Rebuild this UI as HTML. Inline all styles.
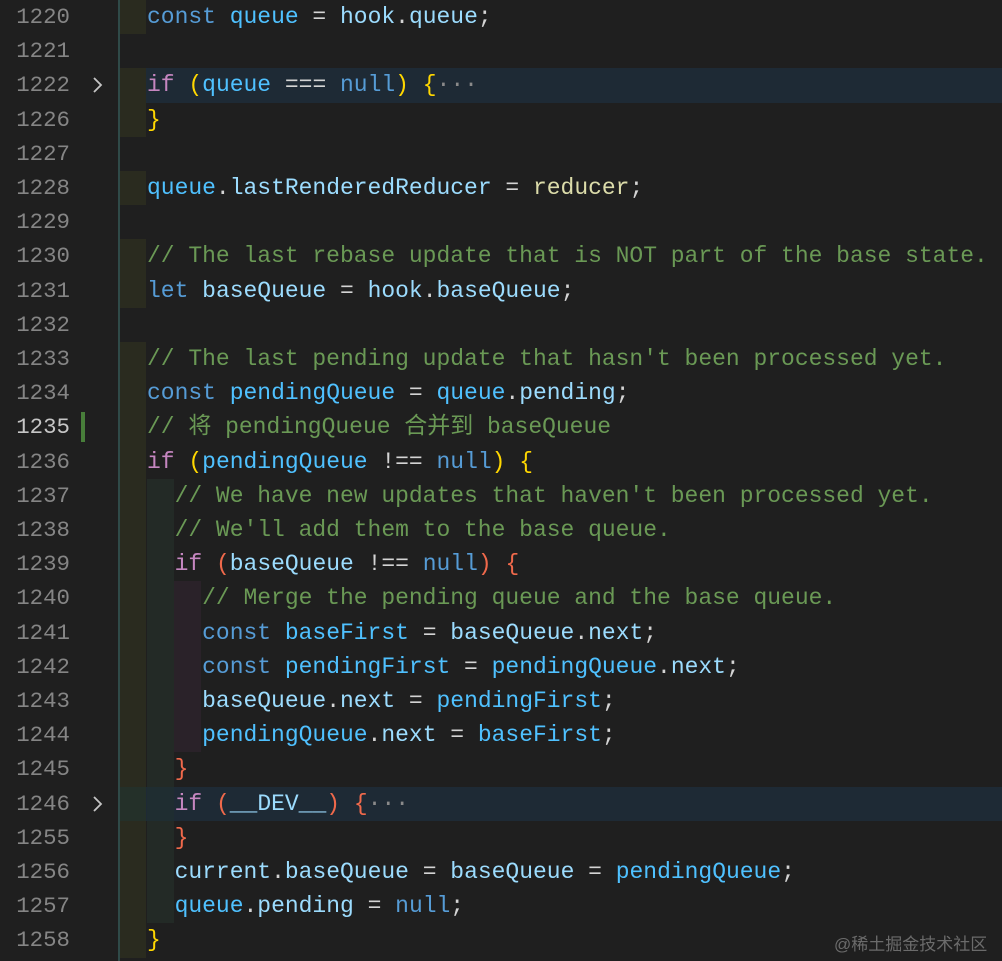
<!DOCTYPE html>
<html><head><meta charset="utf-8"><style>
body{margin:0;width:1002px;height:961px;background:#1f1f1f;overflow:hidden;position:relative;font-family:"Liberation Mono","Noto Sans CJK SC",monospace;font-size:22.98px;}
.r{position:absolute;left:0;width:1002px;height:34.2px;line-height:34.2px;white-space:pre;}
.n{position:absolute;left:0;width:70px;text-align:right;color:#858585;font-size:22.4px;}
.c{position:absolute;left:147px;color:#d4d4d4;}
.hl{position:absolute;left:120px;right:0;top:0;bottom:0;background:#1e2a35;}
.g1{position:absolute;left:120px;width:26px;top:0;bottom:0;background:#2a2b1f;}
.g2{position:absolute;left:147px;width:27px;top:0;bottom:0;background:#232a26;}
.g3{position:absolute;left:174px;width:27px;top:0;bottom:0;background:#2a2229;}
.k{color:#569cd6}.i{color:#c586c0}.v{color:#9cdcfe}.cv{color:#4fc1ff}.cm{color:#6a9955}.y{color:#ffd700}.o{color:#f0694b}.f{color:#dcdcaa}.d{color:#8a8a8a}
.chev{position:absolute;left:90px;top:0;}
</style></head><body>
<div style="position:absolute;left:118px;top:0;width:2px;height:961px;background:#2f4a48"></div>
<div class="r" style="top:0"><div class="g1"></div><span class="n">1220</span><span class="c"><span class="k">const</span> <span class="cv">queue</span> = <span class="v">hook</span>.<span class="v">queue</span>;</span></div>
<div class="r" style="top:34.2px"><span class="n">1221</span></div>
<div class="r" style="top:68.4px"><div class="hl"></div><div class="g1"></div><span class="n">1222</span><svg class="chev" width="16" height="34"><path d="M4 10 L11 17 L4 24" stroke="#c5c5c5" stroke-width="1.8" fill="none"/></svg><span class="c"><span class="i">if</span> <span class="y">(</span><span class="cv">queue</span> === <span class="k">null</span><span class="y">)</span> <span class="y">{</span><span class="d">···</span></span></div>
<div class="r" style="top:102.6px"><div class="g1"></div><span class="n">1226</span><span class="c"><span class="y">}</span></span></div>
<div class="r" style="top:136.8px"><span class="n">1227</span></div>
<div class="r" style="top:171px"><div class="g1"></div><span class="n">1228</span><span class="c"><span class="cv">queue</span>.<span class="v">lastRenderedReducer</span> = <span class="f">reducer</span>;</span></div>
<div class="r" style="top:205.2px"><span class="n">1229</span></div>
<div class="r" style="top:239.4px"><div class="g1"></div><span class="n">1230</span><span class="c cm">// The last rebase update that is NOT part of the base state.</span></div>
<div class="r" style="top:273.6px"><div class="g1"></div><span class="n">1231</span><span class="c"><span class="k">let</span> <span class="v">baseQueue</span> = <span class="v">hook</span>.<span class="v">baseQueue</span>;</span></div>
<div class="r" style="top:307.8px"><span class="n">1232</span></div>
<div class="r" style="top:342px"><div class="g1"></div><span class="n">1233</span><span class="c cm">// The last pending update that hasn't been processed yet.</span></div>
<div class="r" style="top:376.2px"><div class="g1"></div><span class="n">1234</span><span class="c"><span class="k">const</span> <span class="cv">pendingQueue</span> = <span class="cv">queue</span>.<span class="v">pending</span>;</span></div>
<div class="r" style="top:410.4px"><div class="g1"></div><span class="n" style="color:#c6c6c6">1235</span><div style="position:absolute;left:81px;top:2px;width:4px;height:30px;background:#487e3a"></div><span class="c cm">// 将 pendingQueue 合并到 baseQueue</span></div>
<div class="r" style="top:444.6px"><div class="g1"></div><span class="n">1236</span><span class="c"><span class="i">if</span> <span class="y">(</span><span class="cv">pendingQueue</span> !== <span class="k">null</span><span class="y">)</span> <span class="y">{</span></span></div>
<div class="r" style="top:478.8px"><div class="g1"></div><div class="g2"></div><span class="n">1237</span><span class="c cm">  // We have new updates that haven't been processed yet.</span></div>
<div class="r" style="top:513px"><div class="g1"></div><div class="g2"></div><span class="n">1238</span><span class="c cm">  // We'll add them to the base queue.</span></div>
<div class="r" style="top:547.2px"><div class="g1"></div><div class="g2"></div><span class="n">1239</span><span class="c">  <span class="i">if</span> <span class="o">(</span><span class="v">baseQueue</span> !== <span class="k">null</span><span class="o">)</span> <span class="o">{</span></span></div>
<div class="r" style="top:581.4px"><div class="g1"></div><div class="g2"></div><div class="g3"></div><span class="n">1240</span><span class="c cm">    // Merge the pending queue and the base queue.</span></div>
<div class="r" style="top:615.6px"><div class="g1"></div><div class="g2"></div><div class="g3"></div><span class="n">1241</span><span class="c">    <span class="k">const</span> <span class="cv">baseFirst</span> = <span class="v">baseQueue</span>.<span class="v">next</span>;</span></div>
<div class="r" style="top:649.8px"><div class="g1"></div><div class="g2"></div><div class="g3"></div><span class="n">1242</span><span class="c">    <span class="k">const</span> <span class="cv">pendingFirst</span> = <span class="cv">pendingQueue</span>.<span class="v">next</span>;</span></div>
<div class="r" style="top:684px"><div class="g1"></div><div class="g2"></div><div class="g3"></div><span class="n">1243</span><span class="c">    <span class="v">baseQueue</span>.<span class="v">next</span> = <span class="cv">pendingFirst</span>;</span></div>
<div class="r" style="top:718.2px"><div class="g1"></div><div class="g2"></div><div class="g3"></div><span class="n">1244</span><span class="c">    <span class="cv">pendingQueue</span>.<span class="v">next</span> = <span class="cv">baseFirst</span>;</span></div>
<div class="r" style="top:752.4px"><div class="g1"></div><div class="g2"></div><span class="n">1245</span><span class="c">  <span class="o">}</span></span></div>
<div class="r" style="top:786.6px"><div class="hl"></div><div class="g1" style="background:#243029"></div><div class="g2" style="background:#1f2d31"></div><span class="n">1246</span><svg class="chev" width="16" height="34"><path d="M4 10 L11 17 L4 24" stroke="#c5c5c5" stroke-width="1.8" fill="none"/></svg><span class="c">  <span class="i">if</span> <span class="o">(</span><span class="v">__DEV__</span><span class="o">)</span> <span class="o">{</span><span class="d">···</span></span></div>
<div class="r" style="top:820.8px"><div class="g1"></div><div class="g2"></div><span class="n">1255</span><span class="c">  <span class="o">}</span></span></div>
<div class="r" style="top:855px"><div class="g1"></div><div class="g2"></div><span class="n">1256</span><span class="c">  <span class="v">current</span>.<span class="v">baseQueue</span> = <span class="v">baseQueue</span> = <span class="cv">pendingQueue</span>;</span></div>
<div class="r" style="top:889.2px"><div class="g1"></div><div class="g2"></div><span class="n">1257</span><span class="c">  <span class="cv">queue</span>.<span class="v">pending</span> = <span class="k">null</span>;</span></div>
<div class="r" style="top:923.4px"><div class="g1"></div><span class="n">1258</span><span class="c"><span class="y">}</span></span></div>
<div style="position:absolute;left:834px;top:930px;font-family:'Liberation Sans','Noto Sans CJK SC',sans-serif;font-size:17px;color:#6b6b6b;">@稀土掘金技术社区</div>
</body></html>
